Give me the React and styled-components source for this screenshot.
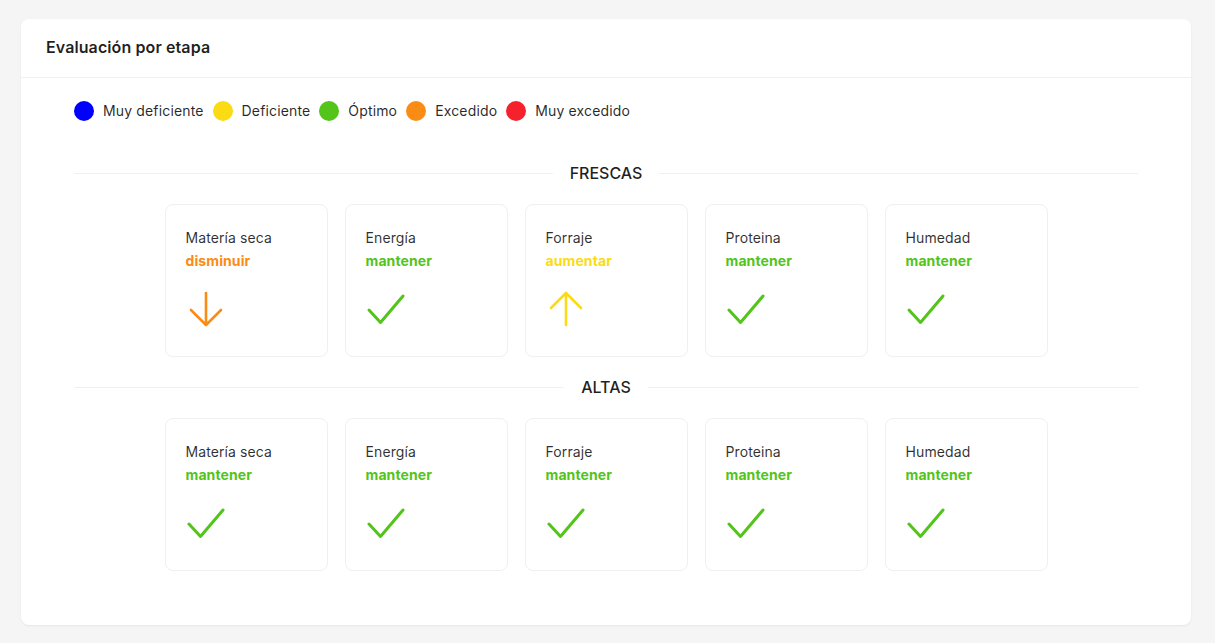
import React from "react";
import styled, { createGlobalStyle } from "styled-components";

const COLORS = {
  blue: "#0000ff",
  yellow: "#fadb14",
  green: "#52c41a",
  orange: "#fa8c16",
  red: "#f5222d",
};

const Global = createGlobalStyle`
  html, body { margin: 0; padding: 0; background: #f5f5f5; }
  body { font-family: Inter, "Noto Sans", "Liberation Sans", sans-serif; color: rgba(0,0,0,0.88); }
  * { box-sizing: border-box; }
`;

const Page = styled.div`
  padding: 19px 24px 18px 21px;
  min-height: 643px;
`;

const Panel = styled.section`
  background: #fff;
  border-radius: 8px;
  box-shadow: 0 1px 2px rgba(0, 0, 0, 0.04), 0 1px 3px rgba(0, 0, 0, 0.03);
`;

const PanelHead = styled.header`
  height: 59px;
  display: flex;
  align-items: center;
  padding: 0 25px 2px;
  border-bottom: 1px solid #f0f0f0;
`;

const PanelTitle = styled.h2`
  margin: 0;
  font-size: 16px;
  font-weight: 600;
  letter-spacing: 0.1px;
  color: rgba(0, 0, 0, 0.88);
`;

const PanelBody = styled.div`
  padding: 22px 53px 54px;
`;

const Legend = styled.ul`
  list-style: none;
  margin: 0;
  padding: 0;
  display: flex;
  align-items: center;
  gap: 9px;
  height: 21px;
`;

const LegendItem = styled.li`
  display: flex;
  align-items: center;
  gap: 9px;
  font-size: 14px;
  letter-spacing: 0.15px;
  color: rgba(0, 0, 0, 0.85);
`;

const Dot = styled.span`
  width: 20px;
  height: 20px;
  border-radius: 50%;
  background: ${(p) => p.$color};
  flex: none;
`;

const Section = styled.div`
  margin-top: ${(p) => (p.$first ? "40px" : "18px")};
`;

const Divider = styled.div`
  display: flex;
  align-items: center;
  height: 24px;
  font-size: 16px;
  font-weight: 500;
  color: rgba(0, 0, 0, 0.88);
  &::before,
  &::after {
    content: "";
    flex: 1;
    border-top: 1px solid #f0f0f0;
  }
`;

const DividerText = styled.span`
  padding: 0 17px;
`;

const CardRow = styled.div`
  margin-top: 19px;
  display: flex;
  justify-content: center;
  gap: 17px;
`;

const Card = styled.div`
  width: 163px;
  height: 153px;
  border: 1px solid #f0f0f0;
  border-radius: 8px;
  padding: 21px 20px 0 20px;
  background: #fff;
`;

const CardTitle = styled.div`
  font-size: 14px;
  line-height: 23px;
  letter-spacing: 0.1px;
  color: rgba(0, 0, 0, 0.82);
`;

const CardStatus = styled.div`
  font-size: 14px;
  line-height: 23px;
  font-weight: 700;
  letter-spacing: 0.1px;
  color: ${(p) => p.$color};
`;

const IconBox = styled.div`
  margin-top: 17px;
  width: 40px;
  height: 40px;
  color: ${(p) => p.$color};
  svg { display: block; }
`;

const Icon = ({ kind }) => {
  const common = {
    width: 40,
    height: 40,
    viewBox: "0 0 40 40",
    fill: "none",
    stroke: "currentColor",
    strokeWidth: 3,
    strokeLinecap: "round",
    strokeLinejoin: "round",
  };
  if (kind === "down")
    return (
      <svg {...common} strokeWidth={2.6}>
        <path d="M20 4v32M5 21l15 15 15-15" />
      </svg>
    );
  if (kind === "up")
    return (
      <svg {...common} strokeWidth={2.6}>
        <path d="M20 36V4M5 19L20 4l15 15" />
      </svg>
    );
  return (
    <svg {...common}>
      <path d="M3 21l11.5 12.5L37 7" />
    </svg>
  );
};

const STATUS = {
  disminuir: { color: COLORS.orange, icon: "down" },
  aumentar: { color: COLORS.yellow, icon: "up" },
  mantener: { color: COLORS.green, icon: "check" },
};

const legend = [
  ["Muy deficiente", COLORS.blue],
  ["Deficiente", COLORS.yellow],
  ["Óptimo", COLORS.green],
  ["Excedido", COLORS.orange],
  ["Muy excedido", COLORS.red],
];

const sections = [
  {
    name: "FRESCAS",
    items: [
      ["Matería seca", "disminuir"],
      ["Energía", "mantener"],
      ["Forraje", "aumentar"],
      ["Proteina", "mantener"],
      ["Humedad", "mantener"],
    ],
  },
  {
    name: "ALTAS",
    items: [
      ["Matería seca", "mantener"],
      ["Energía", "mantener"],
      ["Forraje", "mantener"],
      ["Proteina", "mantener"],
      ["Humedad", "mantener"],
    ],
  },
];

export default function App() {
  return (
    <>
      <Global />
      <Page>
        <Panel>
          <PanelHead>
            <PanelTitle>Evaluación por etapa</PanelTitle>
          </PanelHead>
          <PanelBody>
            <Legend>
              {legend.map(([label, color]) => (
                <LegendItem key={label}>
                  <Dot $color={color} />
                  {label}
                </LegendItem>
              ))}
            </Legend>
            {sections.map((s, i) => (
              <Section key={s.name} $first={i === 0}>
                <Divider>
                  <DividerText>{s.name}</DividerText>
                </Divider>
                <CardRow>
                  {s.items.map(([title, status]) => {
                    const st = STATUS[status];
                    return (
                      <Card key={title}>
                        <CardTitle>{title}</CardTitle>
                        <CardStatus $color={st.color}>{status}</CardStatus>
                        <IconBox $color={st.color}>
                          <Icon kind={st.icon} />
                        </IconBox>
                      </Card>
                    );
                  })}
                </CardRow>
              </Section>
            ))}
          </PanelBody>
        </Panel>
      </Page>
    </>
  );
}
